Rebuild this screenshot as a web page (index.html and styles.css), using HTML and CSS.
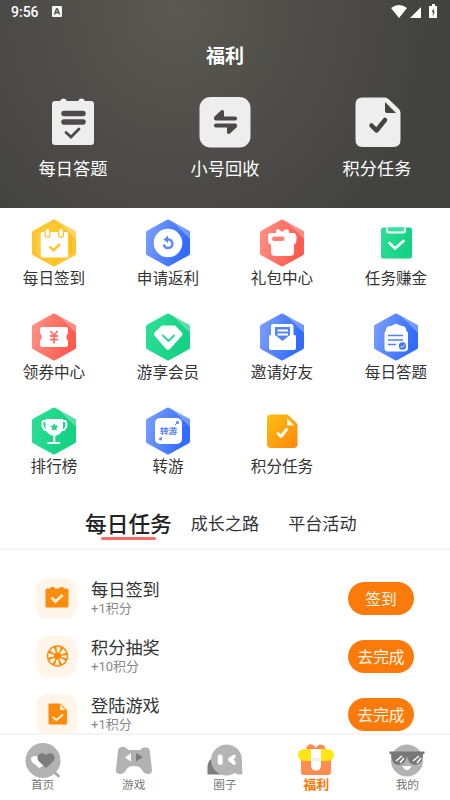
FILE: index.html
```html
<!DOCTYPE html>
<html lang="zh-CN">
<head>
<meta charset="utf-8">
<title>福利</title>
<link rel="stylesheet" href="styles.css">
</head>
<body>
<svg class="defs" width="0" height="0">
  <defs>
    <linearGradient id="yellow" x1="0" x2="1" y2=".3"><stop stop-color="#ffd14d"/><stop offset="1" stop-color="#fdbe10"/></linearGradient>
    <linearGradient id="blue" x1="0" x2="1" y2=".3"><stop stop-color="#7c9fff"/><stop offset="1" stop-color="#326cff"/></linearGradient>
    <linearGradient id="red" x1="0" x2="1" y2=".3"><stop stop-color="#ff9186"/><stop offset="1" stop-color="#ff5b50"/></linearGradient>
    <linearGradient id="green" x1="0" x2="1" y2=".3"><stop stop-color="#2ddf95"/><stop offset="1" stop-color="#14d184"/></linearGradient>
    <linearGradient id="orange" x1="0" x2="1" y2="1"><stop stop-color="#ffc011"/><stop offset="1" stop-color="#fb870c"/></linearGradient>
    <path id="hex" d="M24 2.5 44 13.5V34.5L24 45.5 4 34.5V13.5Z" stroke-width="4" stroke-linejoin="round"/>
    <path id="facet" d="M29 3 44 11.5Q46 12.700 46 15V20Z" fill="#fff" opacity=".3"/>
  </defs>
</svg>
<div class="screen">
  <header class="hero">
    <div class="status">
      <span class="clock">9:56</span>
      <svg class="badge" width="10" height="11"><rect width="10" height="11" rx="1" fill="#f4f4f4"/><path d="M2.500 8.500 4.500 3H5.500L7.500 8.500M3.500 6.500H6.500" fill="none" stroke="#4b4a47" stroke-width="1.300"/></svg>
      <svg class="signals" width="48" height="14" fill="#fff"><path d="M0 4Q8-2 16 4L8 14ZM19 14 30 3V14ZM39 2H41V0H44V2H46V14H38V2Z"/><path d="M43 4 40.500 8H42L41.500 12 44 7.500H42.500Z" fill="#444"/></svg>
    </div>
    <h1>福利</h1>
    <div class="shortcuts">
      <a class="shortcut">
        <svg width="52" height="52" viewBox="0 0 52 52"><path d="M8 4H13Q14 1 17 1.500 19 1.500 20 4H31Q32 1 35 1.500 37 1.500 38 4H44Q47 4 47 7V45Q47 48 44 48H8Q5 48 5 45V7Q5 4 8 4Z" fill="#eee"/><path d="M17 16.500H36M17 25H36" stroke="#4c4b48" stroke-width="5.500" stroke-linecap="round"/><path d="M19 35.500 24 40 32 32" fill="none" stroke="#4c4b48" stroke-width="2.800" stroke-linecap="round"/></svg>
        <span>每日答题</span>
      </a>
      <a class="shortcut">
        <svg width="52" height="52" viewBox="0 0 52 52"><rect x=".5" y="0" width="51" height="50.500" rx="11" fill="#eee"/><path d="M17 21.500H36M17 28.500H36" stroke="#4a4946" stroke-width="4.200" stroke-linecap="round"/><path d="M15 20 22 13.500Q25 12 25 15V21ZM38 30 31 36.500Q28 38 28 35V29Z" fill="#4a4946"/></svg>
        <span>小号回收</span>
      </a>
      <a class="shortcut">
        <svg width="52" height="52" viewBox="0 0 52 52"><path d="M11.500 .5H34Q36 .5 38 2.500L48 12Q49.500 14 49.500 16V43Q49.500 50 42.500 50H11.500Q4.500 50 4.500 43V7Q4.500 .5 11.500 .5Z" fill="#eee"/><path d="M34 5 45 16H36Q34 16 34 14Z" fill="#434341"/><path d="M20.500 28.500 25.500 33.500 34 23" fill="none" stroke="#434341" stroke-width="4.500" stroke-linecap="round" stroke-linejoin="round"/></svg>
        <span>积分任务</span>
      </a>
    </div>
  </header>

  <section class="services">
    <a class="service">
      <svg viewBox="0 0 48 48"><use href="#hex" fill="url(#yellow)" stroke="#fec52f"/><use href="#facet"/><rect x="10.700" y="13" width="27.500" height="25.500" rx="1.500" fill="#fff"/><path d="M17.500 11.500V16M31 11.500V16" stroke="#fec52f" stroke-width="6" stroke-linecap="round"/><path d="M17.500 11.500V16M31 11.500V16" stroke="#fff" stroke-width="3.500" stroke-linecap="round"/><path d="M19.500 27.500 23.500 31.500 30 25" fill="none" stroke="#fec52f" stroke-width="2.500"/></svg>
      <span>每日签到</span>
    </a>
    <a class="service">
      <svg viewBox="0 0 48 48"><use href="#hex" fill="url(#blue)" stroke="url(#blue)"/><use href="#facet"/><circle cx="24" cy="24" r="14.300" fill="#fff"/><path d="M22 20.500H24.500A4.300 4.300 0 1 1 19.800 25.500" fill="none" stroke="#5e88ff" stroke-width="2.500"/><path d="M19.500 20.500 24 16.500V24Z" fill="#5e88ff"/></svg>
      <span>申请返利</span>
    </a>
    <a class="service">
      <svg viewBox="0 0 48 48"><use href="#hex" fill="url(#red)" stroke="url(#red)"/><use href="#facet"/><path d="M13 14H18V11.500Q20 8.500 24 13 28 8.500 31 11.500V14H35Q38 14 38.500 17V21Q38 25 36 25.500V33Q36 37 32 37H17Q13 37 13 33V25.500Q10 25 10 21V17Q10 14 13 14Z" fill="#fff"/><rect x="14" y="17.500" width="12.500" height="4.500" rx="2.200" fill="#ff8076"/></svg>
      <span>礼包中心</span>
    </a>
    <a class="service">
      <svg viewBox="0 0 48 48"><rect x="9" y="8.500" width="31" height="32" rx="2.500" fill="#bff6de" opacity=".45"/><rect x="9" y="8.500" width="31" height="31" rx="2.500" fill="url(#green)"/><path d="M15 8.500V11.500Q15 13.500 17 13.500H31Q33 13.500 33 11.500V8.500" fill="#41dfa0" stroke="#fff" stroke-width="1.800"/><path d="M17.500 24 23 29.500 31.500 22" fill="none" stroke="#fff" stroke-width="2.700" stroke-linecap="round"/></svg>
      <span>任务赚金</span>
    </a>
    <a class="service">
      <svg viewBox="0 0 48 48"><use href="#hex" fill="url(#red)" stroke="url(#red)"/><use href="#facet"/><path d="M12 14H36Q38 14 38 16V20Q34.500 24 38 28V32Q38 34 36 34H12Q10 34 10 32V28Q13.500 24 10 20V16Q10 14 12 14Z" fill="#fff"/><path d="M20.500 18 24 22.500 27.500 18M24 22V30.500M20 23H28M20 26.500H28" fill="none" stroke="#ff746a" stroke-width="1.800"/></svg>
      <span>领券中心</span>
    </a>
    <a class="service">
      <svg viewBox="0 0 48 48"><use href="#hex" fill="url(#green)" stroke="url(#green)"/><use href="#facet"/><path d="M18 12.500H31L38 19.500Q39 21 38 22.500L26 36Q24 37.500 22 36L10.500 22.500Q9.500 21 10.500 19.500Z" fill="#fff"/><path d="M19 22.500 24.500 28 30 22.500" fill="none" stroke="#21d58d" stroke-width="1.800" stroke-linecap="round"/></svg>
      <span>游享会员</span>
    </a>
    <a class="service">
      <svg viewBox="0 0 48 48"><use href="#hex" fill="url(#blue)" stroke="url(#blue)"/><use href="#facet"/><path d="M15 11H33Q35.500 11 35.500 13.500V22H37Q38 22 38 24V35Q38 37 36 37H13Q11 37 11 35V24Q11 22 13 22V13Q13 11 15 11Z" fill="#fff"/><path d="M17 14H32V22L24.500 28 17 22Z" fill="#5484fb"/><path d="M19.500 17.500H30M19.500 21.500H30" stroke="#fff" stroke-width="2"/></svg>
      <span>邀请好友</span>
    </a>
    <a class="service">
      <svg viewBox="0 0 48 48"><use href="#hex" fill="url(#blue)" stroke="url(#blue)"/><use href="#facet"/><path d="M19 13 22 11.500Q24 10 26 11.500L30 13Q34 13 34 17L36 20V35Q36 38.500 32 38.500H16Q12.500 38.500 12.500 35V20L14 17Q14 13 19 13Z" fill="#fff"/><path d="M16 22.500H31M16 27H31M16 31.500H24" stroke="#5080ff" stroke-width="1.700"/><circle cx="30.500" cy="33" r="3.700" fill="#4378f4"/><path d="M28.500 33 30 34.500 33 31.500" fill="none" stroke="#fff"/></svg>
      <span>每日答题</span>
    </a>
    <a class="service">
      <svg viewBox="0 0 48 48"><use href="#hex" fill="url(#green)" stroke="url(#green)"/><use href="#facet"/><path d="M15.500 12H33V21Q32 27 25.300 29V35H30V37H17.500V35H23.300V29Q16 27 15.500 21Z" fill="#fff"/><path d="M17 14H13Q11 19 15 23H17M32 14H35.500Q38 19 34 23H31" fill="none" stroke="#fff" stroke-width="2"/><path d="M24.300 16 25.500 18.500 28.300 19 26.300 21 26.800 23.800 24.300 22.500 21.800 23.800 22.300 21 20.300 19 23.100 18.500Z" fill="#22d48c"/></svg>
      <span>排行榜</span>
    </a>
    <a class="service">
      <svg viewBox="0 0 48 48"><use href="#hex" fill="url(#blue)" stroke="url(#blue)"/><use href="#facet"/><rect x="11" y="11" width="27" height="26" rx="5" fill="#fff"/><text class="swap" x="24.500" y="27">转游</text><path d="M31 18 33 16M16 32 18 30" stroke="#5585f9"/><circle cx="33.500" cy="15.500" r="1.500" fill="#5585f9"/><circle cx="16.500" cy="32" r="1.500" fill="#5585f9"/></svg>
      <span>转游</span>
    </a>
    <a class="service">
      <svg viewBox="0 0 48 48"><path d="M13 7.500H29.500L39.500 17V37Q39.500 41 35.500 41H13Q9 41 9 37V11.500Q9 7.500 13 7.500Z" fill="url(#orange)"/><path d="M29 11 36.500 18.500H30.500Q29 18.500 29 17Z" fill="#fff6dc"/><path d="M20 26.500 23 29.500 28.500 22.500" fill="none" stroke="#fff9ed" stroke-width="3" stroke-linecap="round" stroke-linejoin="round"/></svg>
      <span>积分任务</span>
    </a>
  </section>

  <nav class="tabs">
    <a class="tab active">每日任务</a>
    <a class="tab">成长之路</a>
    <a class="tab">平台活动</a>
  </nav>

  <main class="tasks">
    <article class="task">
      <div class="task-icon"><svg width="24" height="24"><path d="M.5 4Q.5 2.500 2 2.500H5L6 1H9L10 2.500H14L15 1H18L19 2.500H22Q23.500 2.500 23.500 4V20Q23.500 21.500 22 21.500H2Q.5 21.500 .5 20Z" fill="#fd8c0b"/><path d="M6.500 11.500 10.500 15.500 17.500 9" fill="none" stroke="#fff2dc" stroke-width="2.800"/></svg></div>
      <div class="copy"><h2>每日签到</h2><p>+1积分</p></div>
      <button>签到</button>
    </article>
    <article class="task">
      <div class="task-icon"><svg width="24" height="24"><circle cx="12.500" cy="12" r="10.700" fill="#fd8c0b"/><circle cx="12.500" cy="12" r="6.500" fill="none" stroke="#fff5e6" stroke-width="5.400" stroke-dasharray="3.200 1.905" stroke-dashoffset="1.600"/></svg></div>
      <div class="copy"><h2>积分抽奖</h2><p>+10积分</p></div>
      <button>去完成</button>
    </article>
    <article class="task">
      <div class="task-icon"><svg width="24" height="24"><path d="M4.500 1.500H15L22 8V21.500Q22 22.500 21 22.500H4.500Q3.500 22.500 3.500 21.500V2.500Q3.500 1.500 4.500 1.500Z" fill="#fd8c0b"/><path d="M15 3 20.500 8H16Q15 8 15 7Z" fill="#fff5e6"/><path d="M7.500 15 11.500 18 18 12.500" fill="none" stroke="#fff2dc" stroke-width="1.800"/></svg></div>
      <div class="copy"><h2>登陆游戏</h2><p>+1积分</p></div>
      <button>去完成</button>
    </article>
  </main>

  <nav class="bottom">
    <a>
      <svg viewBox="0 0 40 36"><path d="M31 29 35.500 33" stroke="#aaa" stroke-width="3" stroke-linecap="round"/><circle cx="20" cy="17.500" r="17.500" fill="#b2b2b2"/><path d="M16 25 9 19Q6 14 12 13 15 12.500 16 15 19 12.500 21 15.500L20 23Z" fill="#fff"/><path d="M23 25 15.500 18Q13 14 16.500 11 20 9 23 12 26 9 30 11 33 14 30.500 18Z" fill="#7d7d7d"/></svg>
      <span>首页</span>
    </a>
    <a>
      <svg viewBox="0 0 40 36"><path d="M7 4Q12 3 14 7H26Q29 3 34 5 36 6 36 10L38 27Q38 31 34 31 30 31 28 27 26 23 20 23 14 23 12 27 10 31 6 31 1 31 2 26L4 8Q4 5 7 4Z" fill="#b2b2b2"/><path d="M11 14.500 17 10V18.500Z" fill="#fff"/><path d="M29 14 22 10V18.500Z" fill="#7b7b7b"/></svg>
      <span>游戏</span>
    </a>
    <a>
      <svg viewBox="0 0 40 36"><path d="M7 15H19V31.500H2.500V23Q3 18 7 15Z" fill="#7d7d7d"/><path d="M21.500 1.500A15.500 15.500 0 0 1 37 17V25L37.500 31Q34 32.500 30 30A15.500 15.500 0 1 1 21.500 1.500Z" fill="#b4b4b4"/><rect x="12.700" y="11.500" width="5" height="10.500" rx="2.500" fill="#fff"/><path d="M29 22 24 18.500Q22 16.500 24 14.500L29 11.500Q31.500 12 30.500 14.500L28.500 16.500 30.500 18.800Q31.500 21.500 29 22Z" fill="#fff"/></svg>
      <span>圈子</span>
    </a>
    <a class="current">
      <svg viewBox="0 0 40 36"><path d="M10 6Q12 0 16 1.500 18 2 20 5 22 0 27 2 30 4 29 7Z" fill="#fc8a50"/><path d="M5 15H35V29Q35 32 32 32H8Q5 32 5 29Z" fill="#fd8d50"/><rect x="2" y="6" width="36" height="12" rx="6" fill="#ffe514"/><path d="M15 6H25V22Q25 27.500 20 27.500 15 27.500 15 22Z" fill="#fff"/><path d="M15 15H25V18H15Z" fill="#eee"/></svg>
      <span>福利</span>
    </a>
    <a>
      <svg viewBox="0 0 40 36"><circle cx="20" cy="17.500" r="16" fill="#b2b2b2"/><path d="M2.500 8.500H37.500V11H36Q36 21 28 22 22 22 20 13 18 22 12 22 4.500 22 4 11H2.500Z" fill="#777"/><path d="M9 18 15 13M13 20 17 15M26 18 32 13M30 20 34 15" stroke="#fff" stroke-width="1.500"/><path d="M15.500 23H24.500Q23 27 20 27 17 27 15.500 23Z" fill="#fff"/></svg>
      <span>我的</span>
    </a>
  </nav>
</div>
</body>
</html>
```
FILE: styles.css
```css
* { box-sizing: border-box; }
body { margin: 0; font-family: "Noto Sans CJK SC", sans-serif; color: #333; background: #fff; }
h1, h2, p { margin: 0; font-weight: 400; }
svg { display: block; flex: none; }
.defs { position: absolute; }
.screen { width: 450px; height: 800px; overflow: hidden; display: flex; flex-direction: column; background: #fff; }

.hero {
  flex: none;
  height: 208px;
  color: #fff;
  background: radial-gradient(ellipse 260px 280px at 175px 10px, #5a5851 0%, #4c4b48 60%, #424241 100%);
}
.status { height: 24px; padding: 0 11px; display: flex; align-items: center; }
.status .badge { margin-top: -2px; }
.clock { width: 41px; font: 500 14px/22px Roboto, sans-serif; letter-spacing: 0; }
.signals { margin-left: auto; margin-right: 0; margin-top: -2px; }
h1 { height: 64px; text-align: center; font-size: 19px; line-height: 62px; font-weight: 700; }
.shortcuts { display: grid; grid-template-columns: repeat(3, 152px); margin: 9px -3px 0; }
.shortcut { display: flex; flex-direction: column; align-items: center; }
.shortcut span { font-size: 17.200px; line-height: 26px; margin-top: 6px; }

.services { flex: none; height: 282px; margin: 0 -3px; padding-top: 11px; display: grid; grid-template-columns: repeat(4, 114px); grid-auto-rows: 94px; }
.service { display: flex; flex-direction: column; align-items: center; }
.service svg { width: 48px; height: 48px; }
.service span { font-size: 15.600px; line-height: 21px; }
.swap { font-size: 8.500px; font-weight: 700; fill: #5585f9; text-anchor: middle; }

.tabs { flex: none; height: 60px; padding: 8px 0 0 85px; display: flex; align-items: flex-start; border-bottom: 2px solid #f5f5f5; }
.tab { position: relative; font-size: 17.100px; line-height: 50px; margin-right: 29px; }
.tab.active { font-size: 21.700px; font-weight: 500; color: #222; margin-right: 19px; }
.tab.active::after { content: ""; position: absolute; left: 16px; right: 16px; top: 39px; height: 3px; border-radius: 2px; background: #f66d62; }

.tasks { flex: 1; min-height: 0; overflow: hidden; padding: 19px 36px 0; }
.task { height: 58px; display: flex; align-items: center; }
.task-icon { width: 41px; height: 41px; border-radius: 12px; background: #fff5e8; display: grid; place-items: center; }
.copy { margin: 0 0 3px 14px; flex: 1; }
.copy h2 { font-size: 17.200px; line-height: 24px; }
.copy p { font: 13px/15px Roboto, "Noto Sans CJK SC", sans-serif; color: #888; }
button { width: 66px; height: 33px; padding: 0; border: 0; border-radius: 17px; background: #fb7a0a; color: #fff8e8; font: 400 15.700px/33px "Noto Sans CJK SC", sans-serif; }

.bottom { flex: none; height: 67px; margin: 0 -3px; border-top: 2px solid #f5f5f5; background: #fff; display: grid; grid-template-columns: repeat(5, 91.200px); padding-top: 8px; }
.bottom a { display: flex; flex-direction: column; align-items: center; color: #777; font-size: 11.700px; line-height: 15px; }
.bottom svg { width: 40px; height: 36px; margin-bottom: -3px; }
.bottom .current { color: #f97908; font-weight: 700; font-size: 13px; }
```
